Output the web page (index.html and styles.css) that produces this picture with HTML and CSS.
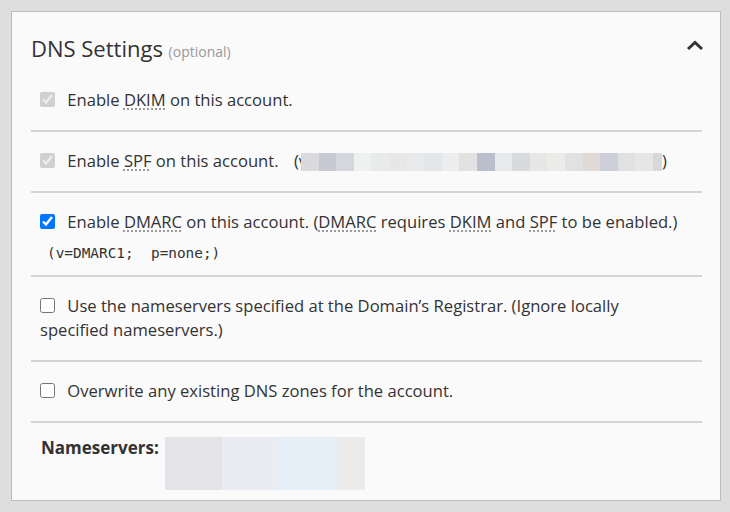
FILE: index.html
```html
<html>
  <head>
    <link rel="stylesheet" href="styles.css">
  </head>
  <body class="body">

    <section class="Panel">
      <header class="Panel-head">
        <h2 class="Panel-title">DNS Settings <small class="Panel-note">(optional)</small></h2>
        <button class="Panel-toggle" aria-label="Collapse">
          <svg width="18" height="11" viewBox="0 0 18 11">
            <polyline points="3,9 10,2.5 17,9" fill="none" stroke="#333" stroke-width="3" />
          </svg>
        </button>
      </header>

      <div class="Option">
        <label><input type="checkbox" checked disabled> Enable <abbr title="DomainKeys Identified Mail">DKIM</abbr> on this account.</label>
      </div>

      <div class="Option">
        <label><input type="checkbox" checked disabled> Enable <abbr title="Sender Policy Framework">SPF</abbr> on this account.</label>
        <span class="Option-value">(v<span class="Hidden Hidden--strip"></span>)</span>
      </div>

      <div class="Option Option--tight">
        <label><input type="checkbox" checked> Enable <abbr title="Domain-based Message Authentication, Reporting and Conformance">DMARC</abbr> on this account. (<abbr title="Domain-based Message Authentication, Reporting and Conformance">DMARC</abbr> requires <abbr title="DomainKeys Identified Mail">DKIM</abbr> and <abbr title="Sender Policy Framework">SPF</abbr> to be enabled.)</label>
        <div class="Option-record">(v=DMARC1;  p=none;)</div>
      </div>

      <div class="Option">
        <label><input type="checkbox"> Use the nameservers specified at the Domain’s Registrar. (Ignore locally specified nameservers.)</label>
      </div>

      <div class="Option">
        <label><input type="checkbox"> Overwrite any existing DNS zones for the account.</label>
      </div>

      <div class="Field">
        <span class="Field-label">Nameservers:</span>
        <div class="Hidden Hidden--box"></div>
      </div>
    </section>

  </body>
</html>
```

FILE: styles.css
```css
html, body {
  padding: 0;
  margin: 0;
  font-family: "Open Sans", "Noto Sans", sans-serif;
  color: #333;
}
.body {
  background-color: #dedede;
  padding: 11px 9px 12px 11px;
}
abbr[title] {
  text-decoration: underline dotted #888;
  text-underline-offset: 3px;
}
input[type="checkbox"] {
  width: 15px;
  height: 15px;
  margin: 0 8px 0 0;
  vertical-align: -1px;
}

.Panel {
  background-color: #fafafa;
  border: 1px solid #bcbcbc;
  padding: 21px 18px 10px 19px;
}
.Panel-head {
  display: flex;
  align-items: flex-start;
  justify-content: space-between;
  margin-bottom: 8px;
}
.Panel-title {
  margin: 0;
  font-size: 22px;
  font-weight: normal;
  line-height: 30px;
}
.Panel-note {
  font-size: 14px;
  line-height: 1;
  color: #999;
}
.Panel-toggle {
  border: none;
  background: none;
  padding: 0;
  margin: 7px -1px 0 0;
  display: flex;
  cursor: pointer;
}

.Option {
  padding: 17px 12px 18px 9px;
  border-bottom: 2px solid #d4d4d4;
  font-size: 16.6px;
  line-height: 24px;
}
.Option--tight {
  padding-bottom: 12px;
}
.Option-value {
  margin-left: 11px;
}
.Option-record {
  margin: 9px 0 0 7px;
  font-family: "DejaVu Sans Mono", monospace;
  font-size: 14.4px;
  line-height: 20px;
  white-space: pre;
}

.Field {
  display: flex;
  align-items: flex-start;
  gap: 6px;
  padding: 13px 0 0 10px;
}
.Field-label {
  font-weight: bold;
  font-size: 17px;
  line-height: 24px;
}

/* redacted values, shown as pixel blocks */
.Hidden--strip {
  display: inline-block;
  width: 361px;
  height: 18px;
  margin-left: -6px;
  vertical-align: -4px;
  background: linear-gradient(to right,
    #d9d9de 0 17.6px, #c8c8d3 17.6px 35.2px, #d5d7dc 35.2px 52.8px,
    #eff1f1 52.8px 70.4px, #e8eaeb 70.4px 88px, #e8e7e6 88px 105.6px,
    #e8eaec 105.6px 123.2px, #e4e6e8 123.2px 140.8px, #ecedee 140.8px 158.4px,
    #e2e2e3 158.4px 176px, #b9bfcb 176px 193.6px, #e8e9eb 193.6px 211.2px,
    #d9dadb 211.2px 228.8px, #e8e7e5 228.8px 246.4px, #ebebea 246.4px 264px,
    #e1e1e3 264px 281.6px, #e0d9d5 281.6px 299.2px, #cdd0d8 299.2px 316.8px,
    #e1e1e1 316.8px 334.4px, #e5e6e5 334.4px 352px, #d7d8d8 352px);
}
.Hidden--box {
  width: 200px;
  height: 53px;
  margin-top: 1px;
  background: linear-gradient(to right,
    #e3e3e8 0 57px, #e9ecf0 57px 114px, #e5eff7 114px 172px, #ebebeb 172px);
}
```
